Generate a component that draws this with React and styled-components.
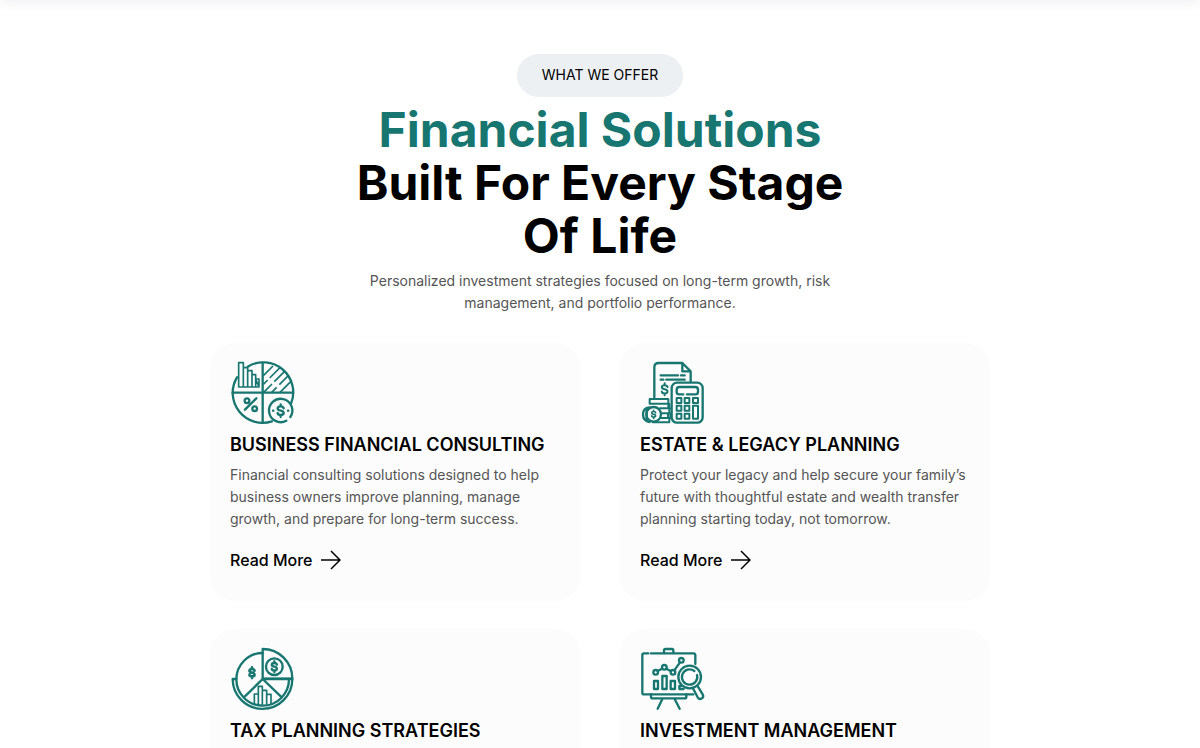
import React from 'react';
import styled, { createGlobalStyle } from 'styled-components';

const services = [
  {
    title: 'Business Financial Consulting',
    text: 'Financial consulting solutions designed to help business owners improve planning, manage growth, and prepare for long-term success.',
    icon: ConsultingIcon,
  },
  {
    title: 'Estate & Legacy Planning',
    text: 'Protect your legacy and help secure your family’s future with thoughtful estate and wealth transfer planning starting today, not tomorrow.',
    icon: EstateIcon,
  },
  {
    title: 'Tax Planning Strategies',
    text: 'Reduce your tax burden with proactive strategies designed around your income, goals, and family.',
    icon: TaxIcon,
  },
  {
    title: 'Investment Management',
    text: 'Personalized investment strategies focused on long-term growth, risk management, and portfolio performance.',
    icon: InvestmentIcon,
  },
];

function App() {
  return (
    <>
      <GlobalStyle />
      <TopBar />
      <Section>
        <Intro>
          <Badge>What we offer</Badge>
          <Heading>
            <Accent>Financial Solutions</Accent> Built For Every Stage Of Life
          </Heading>
          <Lead>
            Personalized investment strategies focused on long-term growth, risk
            management, and portfolio performance.
          </Lead>
        </Intro>
        <Grid>
          {services.map(({ title, text, icon: Icon }) => (
            <Card key={title}>
              <Icon />
              <CardTitle>{title}</CardTitle>
              <CardText>{text}</CardText>
              <ReadMore href="#">
                Read More
                <Arrow />
              </ReadMore>
            </Card>
          ))}
        </Grid>
      </Section>
    </>
  );
}

export default App;

function Arrow() {
  return (
    <ArrowSvg viewBox="0 0 20 20" aria-hidden="true">
      <path d="M0 10H19M10 1L19 10L10 19" />
    </ArrowSvg>
  );
}

function Dollar({ x, y, scale = 1, width = 6 }) {
  return (
    <path
      transform={`translate(${x} ${y}) scale(${scale})`}
      strokeWidth={width / scale}
      d="M9 -7C8 -12 4 -13 0 -13C-6 -13 -9 -10 -9 -6.500C-9 -2 -5 -1 0 0C5 1 9 3 9 7C9 11 5 13 0 13C-5 13 -9 11 -9 7M0 -19V-13M0 13V19"
    />
  );
}

function ConsultingIcon() {
  return (
    <Icon viewBox="24 24 198 198" aria-hidden="true">
      <path d="M45 76A90 90 0 0 0 150 208M77 44A90 90 0 0 1 207 155" />
      <path d="M122 33V212M32 122H212" />
      <path
        strokeWidth="5"
        d="M50 105V32H64V105M64 47H77V105M77 56H90V105M90 68H101V105M101 81H111V105ZM50 105H111"
      />
      <path
        strokeWidth="5"
        strokeLinecap="butt"
        d="M124 71L153 42M124 97L137 84M143 78L174 47M125 121L150 96M157 89L187 59M149 121L164 106M172 98L199 71M174 121L206 89"
      />
      <path d="M69 173L103 139" />
      <circle cx="75" cy="146" r="7" />
      <circle cx="98" cy="170" r="7" />
      <path d="M193 206A35 35 0 1 1 205 195" />
      <Dollar x={176} y={176} width={7} />
      <path d="M153 176H154M198 176H199" />
    </Icon>
  );
}

function EstateIcon() {
  return (
    <Icon viewBox="24 24 198 198" aria-hidden="true">
      <path d="M67 136V46Q67 33 80 33H151L176 58V89M151 33V58H176" />
      <path d="M86 70H138M147 70H158M86 83H94M103 83H158" />
      <Dollar x={98} y={112} scale={0.95} />
      <rect x="119" y="92" width="93" height="120" rx="16" />
      <path d="M154 127H142Q134 127 134 119V113Q134 105 142 105H190Q198 105 198 113V119Q198 127 190 127H165" />
      <path
        strokeWidth="6"
        d="M134 138H148V153H134ZM158 138H172V153H158ZM183 138H198V153H183ZM134 161H148V176H134ZM158 161H172V176H158ZM134 185H148V200H134ZM158 185H172V200H158ZM183 161H198V200H183Z"
      />
      <path
        strokeWidth="6"
        d="M53 141H109V155H53ZM61 155H112V169H84M90 169H115M91 184H115M109 155V169M112 169V184M108 184V198H89M115 184V198M88 198H112V211H62"
      />
      <path d="M52 166Q33 168 33 187Q33 208 53 210M44 170V205" />
      <circle cx="65" cy="187" r="22" />
      <Dollar x={65} y={187} scale={0.65} width={5} />
    </Icon>
  );
}

function TaxIcon() {
  return (
    <Icon viewBox="24 18 198 198" aria-hidden="true">
      <path d="M122 39A79 79 0 1 0 201 118" />
      <path d="M122 27A89 89 0 0 1 211 116H122Z" />
      <path d="M43 117H32A89 89 0 0 0 211 117H122M122 117L68 170M122 117L177 170" />
      <path
        strokeWidth="5"
        d="M97 192V162H109V195M109 192V139H121V195M121 151H134V195M134 163H147V192"
      />
      <circle cx="157" cy="80" r="25" />
      <Dollar x={157} y={80} scale={0.85} width={7} />
      <Dollar x={90} y={98} scale={0.85} width={8} />
    </Icon>
  );
}

function InvestmentIcon() {
  return (
    <Icon viewBox="24 18 198 198" aria-hidden="true">
      <path d="M49 40H36Q31 40 31 45V158Q31 163 36 163H184M57 40H184Q190 40 190 46V72" />
      <path d="M96 39V31Q96 27 100 27H120Q124 27 124 31V39" />
      <path d="M57 163V170Q57 175 62 175H158Q163 175 163 170V163M91 177L77 206M128 177L143 206" />
      <path d="M66 123H78V147H66ZM91 108H104V147H91ZM116 123H129V147H116ZM147 138H142V147H155" />
      <circle cx="71" cy="97" r="7" />
      <circle cx="97" cy="82" r="7" />
      <circle cx="123" cy="97" r="7" />
      <circle cx="148" cy="61" r="7" />
      <path d="M77 93L90 86M103 86L116 93M127 91L144 67" />
      <circle cx="173" cy="111" r="34" />
      <path d="M187 93A23 23 0 1 0 195 105" />
      <path d="M184 147L197 172Q202 180 210 175Q216 171 212 163L196 137" />
    </Icon>
  );
}

const GlobalStyle = createGlobalStyle`
  * {
    box-sizing: border-box;
  }

  body {
    margin: 0;
    background: #fff;
    color: #000;
    font-family: Inter, 'Liberation Sans', sans-serif;
  }
`;

const TopBar = styled.header`
  height: 40px;
  margin-top: -40px;
  box-shadow: 0 2px 12px rgba(20, 20, 60, 0.07);
`;

const Section = styled.section`
  max-width: 820px;
  margin: 0 auto;
  padding: 54px 20px;
`;

const Intro = styled.div`
  display: flex;
  flex-direction: column;
  align-items: center;
  max-width: 500px;
  margin: 0 auto 29px;
  text-align: center;
`;

const Badge = styled.span`
  padding: 9px 25px 11px;
  border-radius: 24px;
  background: #ecf0f3;
  font-size: 14px;
  line-height: 23px;
  text-transform: uppercase;
`;

const Heading = styled.h2`
  margin: 6px 0 8px;
  font-size: 48px;
  font-weight: 700;
  line-height: 53px;
`;

const Accent = styled.span`
  display: block;
  color: #187671;
`;

const Lead = styled.p`
  margin: 0;
  color: #555;
  font-size: 14px;
  line-height: 22px;
`;

const Grid = styled.div`
  display: grid;
  grid-template-columns: repeat(2, 1fr);
  gap: 28px 40px;

  @media (max-width: 700px) {
    grid-template-columns: 1fr;
  }
`;

const Card = styled.article`
  padding: 17px 20px 29px;
  border-radius: 25px;
  background: #fcfcfc;
`;

const Icon = styled.svg`
  display: block;
  width: 66px;
  height: 66px;
  fill: none;
  stroke: #187671;
  stroke-width: 7;
  stroke-linecap: round;
  stroke-linejoin: round;
`;

const CardTitle = styled.h3`
  margin: 8px 0;
  font-size: 18px;
  font-weight: 600;
  line-height: 22px;
  text-transform: uppercase;
`;

const CardText = styled.p`
  margin: 0 0 18px;
  color: #555;
  font-size: 14px;
  line-height: 22px;
`;

const ReadMore = styled.a`
  display: inline-flex;
  align-items: center;
  gap: 8px;
  color: #000;
  font-size: 16px;
  font-weight: 500;
  line-height: 24px;
  text-decoration: none;
`;

const ArrowSvg = styled.svg`
  width: 20px;
  height: 20px;
  fill: none;
  stroke: #000;
  stroke-width: 1.5;
`;
